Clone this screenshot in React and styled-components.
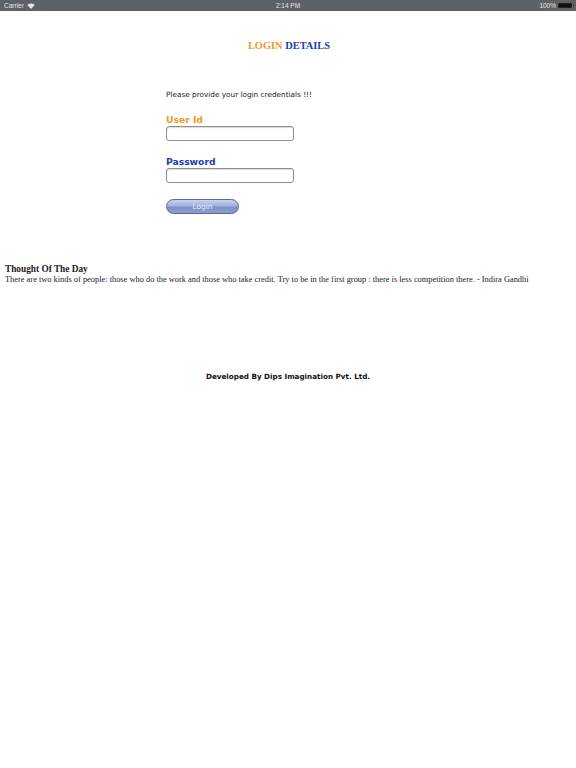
import React from 'react';
import styled, { createGlobalStyle } from 'styled-components';

const GlobalStyle = createGlobalStyle`
    html, body {
        margin: 0;
        padding: 0;
        background: #FFFFFF;
    }
    * {
        box-sizing: border-box;
    }
`

const Page = styled.div`
    width: 576px;
    min-height: 768px;
    background: #FFFFFF;
`

const StatusBar = styled.div`
    height: 11px;
    background: #5E6266;
    display: grid;
    grid-template-columns: 1fr auto 1fr;
    align-items: center;
    padding: 0 4px;
    font-family: "Liberation Sans", Arial, sans-serif;
    font-size: 6.5px;
    color: #E4E4E4;
`

const StatusLeft = styled.div`
    display: flex;
    align-items: center;
    gap: 3px;
`

const StatusRight = styled.div`
    display: flex;
    align-items: center;
    justify-content: flex-end;
    gap: 2px;
`

const Battery = styled.div`
    width: 14px;
    height: 5px;
    background: #111111;
    border: 1px solid #222;
    border-radius: 1px;
    position: relative;
    &:after {
        content: '';
        position: absolute;
        right: -3px;
        top: 1px;
        width: 1px;
        height: 1px;
        background: #222;
    }
`

const Heading = styled.h1`
    margin: 28px 0 0;
    text-align: center;
    font-family: "Liberation Serif", "Times New Roman", serif;
    font-weight: bold;
    font-size: 10.4px;
    line-height: 13px;
    padding-left: 2px;
`

const Word = styled.span`
    color: ${props => props.color};
`

const Form = styled.div`
    margin: 38px 0 0 166px;
    display: flex;
    flex-direction: column;
    width: 160px;
`

const Intro = styled.p`
    margin: 0;
    font-family: "DejaVu Sans", Verdana, sans-serif;
    font-size: 7.3px;
    line-height: 10px;
    color: #222222;
`

const Label = styled.label`
    font-family: "DejaVu Sans", Verdana, sans-serif;
    font-weight: bold;
    font-size: 9.2px;
    line-height: 12px;
    color: ${props => props.color};
    margin-top: ${props => props.top}px;
`

const Input = styled.input`
    width: 128px;
    height: 15px;
    margin-top: 0;
    border: 1px solid #8E8E8E;
    border-radius: 3px;
    background: #FFFFFF;
    padding: 0 3px;
    box-shadow: inset 0 1px 1px rgba(0,0,0,.15);
    outline: none;
`

const LoginButton = styled.button`
    margin-top: 16px;
    width: 73px;
    height: 15px;
    border-radius: 8px;
    border: 1px solid #5A6A9A;
    background: linear-gradient(to bottom, #C9D3EE 0%, #A3B1DC 45%, #7F90C6 55%, #8C9CCF 100%);
    color: #E8ECF8;
    font-family: "DejaVu Sans", Verdana, sans-serif;
    font-size: 7.5px;
    padding: 0;
    cursor: pointer;
`

const Thought = styled.div`
    margin: 50px 0 0 5px;
    font-family: "Liberation Serif", "Times New Roman", serif;
    color: #222222;
`

const ThoughtTitle = styled.div`
    font-weight: bold;
    font-size: 9.3px;
    line-height: 11px;
`

const ThoughtText = styled.div`
    font-size: 8.4px;
    line-height: 10px;
`

const Footer = styled.div`
    margin-top: 87px;
    text-align: center;
    font-family: "DejaVu Sans", Verdana, sans-serif;
    font-weight: bold;
    font-size: 7.2px;
    line-height: 10px;
    color: #111111;
`

const Wifi = () => (
    <svg width="8" height="6" viewBox="0 0 16 12">
        <path d="M8 12 L0.5 4 A11 11 0 0 1 15.5 4 Z" fill="#E4E4E4" />
    </svg>
)

const App = () => {
    return (
    <>
        <GlobalStyle />
        <Page>
            <StatusBar>
                <StatusLeft>Carrier <Wifi /></StatusLeft>
                <div>2:14 PM</div>
                <StatusRight>100% <Battery /></StatusRight>
            </StatusBar>
            <Heading>
                <Word color="#F39A1E">LOGIN</Word> <Word color="#1C3BB3">DETAILS</Word>
            </Heading>
            <Form>
                <Intro>Please provide your login credentials !!!</Intro>
                <Label color="#F39A1E" top={14}>User Id</Label>
                <Input type="text" />
                <Label color="#1C3BB3" top={15}>Password</Label>
                <Input type="password" />
                <LoginButton>Login</LoginButton>
            </Form>
            <Thought>
                <ThoughtTitle>Thought Of The Day</ThoughtTitle>
                <ThoughtText>There are two kinds of people: those who do the work and those who take credit. Try to be in the first group : there is less competition there. - Indira Gandhi</ThoughtText>
            </Thought>
            <Footer>Developed By Dips Imagination Pvt. Ltd.</Footer>
        </Page>
    </>
    )
}

export default App;
